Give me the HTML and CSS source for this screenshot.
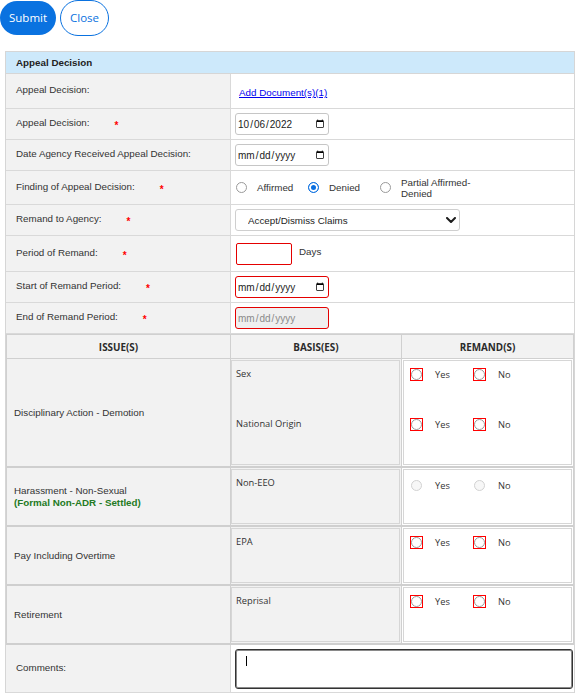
FILE: index.html
```html
<!DOCTYPE html>
<html lang="en">
<head>
<meta charset="utf-8">
<title>Appeal Decision</title>
<link rel="stylesheet" href="styles.css">
</head>
<body>
<div class="actions">
  <button class="btn btn-primary" type="submit">Submit</button>
  <button class="btn btn-outline" type="button">Close</button>
</div>

<section class="panel">
  <h2 class="panel-title">Appeal Decision</h2>

  <div class="field field--link">
    <div class="field-label"><span>Appeal Decision:</span></div>
    <div class="field-value"><a class="doc-link" href="#">Add Document(s)(1)</a></div>
  </div>

  <div class="field">
    <div class="field-label"><span>Appeal Decision:</span><span class="req">*</span></div>
    <div class="field-value"><input class="date" type="date" value="2022-10-06"></div>
  </div>

  <div class="field">
    <div class="field-label"><span>Date Agency Received Appeal Decision:</span></div>
    <div class="field-value"><input class="date" type="date"></div>
  </div>

  <div class="field field--radios">
    <div class="field-label"><span>Finding of Appeal Decision:</span><span class="req">*</span></div>
    <div class="field-value">
      <div class="choices">
        <label class="choice"><input class="radio" type="radio" name="finding"><span class="choice-text">Affirmed</span></label>
        <label class="choice"><input class="radio" type="radio" name="finding" checked><span class="choice-text">Denied</span></label>
        <label class="choice choice--last"><input class="radio" type="radio" name="finding"><span class="choice-text choice-text--wrap">Partial Affirmed-<wbr>Denied</span></label>
      </div>
    </div>
  </div>

  <div class="field">
    <div class="field-label"><span>Remand to Agency:</span><span class="req">*</span></div>
    <div class="field-value">
      <span class="select-wrap">
        <select class="select">
          <option>Accept/Dismiss Claims</option>
        </select>
        <svg class="select-chevron" viewBox="0 0 10 6" aria-hidden="true"><polyline points="1,1 5,5 9,1" fill="none" stroke="#1c1c1c" stroke-width="2" stroke-linecap="round" stroke-linejoin="round"/></svg>
      </span>
    </div>
  </div>

  <div class="field field--days">
    <div class="field-label"><span>Period of Remand:</span><span class="req">*</span></div>
    <div class="field-value">
      <input class="num" type="text">
      <span class="unit">Days</span>
    </div>
  </div>

  <div class="field">
    <div class="field-label"><span>Start of Remand Period:</span><span class="req">*</span></div>
    <div class="field-value"><input class="date date--error" type="date"></div>
  </div>

  <div class="field">
    <div class="field-label"><span>End of Remand Period:</span><span class="req">*</span></div>
    <div class="field-value"><input class="date date--error" type="date" disabled></div>
  </div>

  <table class="issues">
    <thead>
      <tr>
        <th class="th-issue">ISSUE(S)</th>
        <th class="th-basis">BASIS(ES)</th>
        <th class="th-remand">REMAND(S)</th>
      </tr>
    </thead>
    <tbody>
      <tr>
        <td class="issue">Disciplinary Action - Demotion</td>
        <td class="basis">
          <div class="cell-box">
            <div class="basis-item">Sex</div>
            <div class="basis-item">National Origin</div>
          </div>
        </td>
        <td class="remand">
          <div class="cell-box cell-box--white">
            <div class="remand-item">
              <label class="yn"><span class="flag"><input class="radio" type="radio" name="r1"></span><span class="yn-text">Yes</span></label>
              <label class="yn"><span class="flag"><input class="radio" type="radio" name="r1"></span><span class="yn-text">No</span></label>
            </div>
            <div class="remand-item">
              <label class="yn"><span class="flag"><input class="radio" type="radio" name="r2"></span><span class="yn-text">Yes</span></label>
              <label class="yn"><span class="flag"><input class="radio" type="radio" name="r2"></span><span class="yn-text">No</span></label>
            </div>
          </div>
        </td>
      </tr>
      <tr>
        <td class="issue">Harassment - Non-Sexual<br><span class="status">(Formal Non-ADR - Settled)</span></td>
        <td class="basis">
          <div class="cell-box">
            <div class="basis-item">Non-EEO</div>
          </div>
        </td>
        <td class="remand">
          <div class="cell-box cell-box--white">
            <div class="remand-item remand-item--low">
              <label class="yn"><span class="flag flag--off"><input class="radio" type="radio" name="r3" disabled></span><span class="yn-text">Yes</span></label>
              <label class="yn"><span class="flag flag--off"><input class="radio" type="radio" name="r3" disabled></span><span class="yn-text">No</span></label>
            </div>
          </div>
        </td>
      </tr>
      <tr>
        <td class="issue">Pay Including Overtime</td>
        <td class="basis">
          <div class="cell-box">
            <div class="basis-item">EPA</div>
          </div>
        </td>
        <td class="remand">
          <div class="cell-box cell-box--white">
            <div class="remand-item">
              <label class="yn"><span class="flag"><input class="radio" type="radio" name="r4"></span><span class="yn-text">Yes</span></label>
              <label class="yn"><span class="flag"><input class="radio" type="radio" name="r4"></span><span class="yn-text">No</span></label>
            </div>
          </div>
        </td>
      </tr>
      <tr>
        <td class="issue">Retirement</td>
        <td class="basis">
          <div class="cell-box">
            <div class="basis-item">Reprisal</div>
          </div>
        </td>
        <td class="remand">
          <div class="cell-box cell-box--white">
            <div class="remand-item">
              <label class="yn"><span class="flag"><input class="radio" type="radio" name="r5"></span><span class="yn-text">Yes</span></label>
              <label class="yn"><span class="flag"><input class="radio" type="radio" name="r5"></span><span class="yn-text">No</span></label>
            </div>
          </div>
        </td>
      </tr>
    </tbody>
  </table>

  <div class="field field--comments">
    <div class="field-label"><span>Comments:</span></div>
    <div class="field-value">
      <div class="comment-wrap">
        <textarea class="comment" aria-label="Comments"></textarea>
        <span class="caret"></span>
      </div>
    </div>
  </div>
</section>
</body>
</html>
```

FILE: styles.css
```css
html, body {
  margin: 0;
  background: #fff;
}

body {
  font-family: "Liberation Sans", Arial, sans-serif;
  font-size: 9.8px;
  color: #333;
}

/* top action buttons */
.actions {
  display: flex;
  align-items: center;
  gap: 4px;
}

.btn {
  box-sizing: border-box;
  font-family: "Open Sans", "Liberation Sans", sans-serif;
  font-size: 11.5px;
  line-height: 1;
  border-radius: 18px;
  padding: 0 9px;
  cursor: pointer;
}

.btn-primary {
  height: 34px;
  background: #0a72e0;
  color: #fff;
  border: none;
}

.btn-outline {
  height: 36px;
  background: #fff;
  color: #0a72e0;
  border: 1px solid #0a72e0;
}

/* form panel */
.panel {
  box-sizing: border-box;
  width: 570px;
  margin: 15px 0 0 5px;
  border: 1px solid #d6d6d6;
  border-bottom: none;
}

.panel-title {
  margin: 0;
  height: 21px;
  line-height: 21px;
  padding-left: 10px;
  background: #cde9fb;
  border-bottom: 1px solid #d6d6d6;
  font-size: 9.8px;
  font-weight: bold;
  color: #222;
}

.field {
  display: grid;
  grid-template-columns: 225px 1fr;
  height: 30px;
  border-bottom: 1px solid #d9d9d9;
}

.field--link { height: 34px; }
.field--radios { height: 33px; }
.field--days { height: 35px; }
.field--comments { height: 47px; }

.field-label {
  box-sizing: border-box;
  display: flex;
  align-items: center;
  padding: 0 0 3px 10px;
  background: #f2f2f2;
  border-right: 1px solid #d9d9d9;
  white-space: nowrap;
}

.field-value {
  display: flex;
  align-items: center;
  padding-left: 4px;
}

.req {
  margin: 6px 0 0 25px;
  color: #f00;
  font-weight: bold;
  font-size: 10px;
}

.doc-link {
  margin: 3px 0 0 4px;
  color: #0000ee;
  text-decoration: underline;
}

/* inputs */
.date {
  box-sizing: border-box;
  width: 94px;
  height: 22px;
  padding: 0 1px;
  border: 1px solid #c6c6c6;
  border-radius: 3px;
  background: #fff;
  font-family: "Liberation Sans", Arial, sans-serif;
  font-size: 10px;
  color: #222;
}

.date--error {
  border-color: #e40000;
}

.date:disabled {
  background: #efefef;
  color: #8a8a8a;
}

.num {
  box-sizing: border-box;
  width: 56px;
  height: 22px;
  margin-left: 1px;
  border: 1px solid #e40000;
  border-radius: 2px;
  background: #fff;
}

.unit {
  margin: 0 0 5px 7px;
}

.select-wrap {
  position: relative;
  display: inline-flex;
}

.select {
  -webkit-appearance: none;
  appearance: none;
  box-sizing: border-box;
  width: 225px;
  height: 22px;
  padding: 0 0 0 12px;
  border: 1px solid #cfcfcf;
  border-radius: 3px;
  background: #fff;
  font-family: "Liberation Sans", Arial, sans-serif;
  font-size: 9.8px;
  color: #222;
}

.select-chevron {
  position: absolute;
  right: 4px;
  top: 8px;
  width: 10px;
  height: 6px;
  pointer-events: none;
}

/* radio buttons */
.radio {
  -webkit-appearance: none;
  appearance: none;
  box-sizing: border-box;
  flex: none;
  display: block;
  width: 11px;
  height: 11px;
  margin: 0;
  border: 1px solid #9a9a9a;
  border-radius: 50%;
  background: #fff;
}

.radio:checked {
  border-color: #0a6fe0;
  background: #0a6fe0;
  box-shadow: inset 0 0 0 2px #fff;
}

.radio:disabled {
  border-color: #d2d2d2;
  background: #f7f7f7;
}

/* square marker around a required remand choice */
.flag {
  display: inline-flex;
  flex: none;
  border: 1px solid #f00;
}

.flag--off {
  border-color: transparent;
}

.choices {
  display: flex;
  align-items: center;
  padding-left: 1px;
}

.choice {
  display: inline-flex;
  align-items: center;
  width: 72px;
}

.choice--last {
  width: auto;
}

.choice-text {
  margin-left: 10px;
}

.choice-text--wrap {
  width: 74px;
  line-height: 11px;
}

/* issues table */
.issues {
  width: 568px;
  border-collapse: separate;
  border-spacing: 0;
  table-layout: fixed;
  border-top: 1px solid #d0d0d0;
  border-left: 1px solid #d0d0d0;
  border-right: 1px solid #d0d0d0;
  font-family: "Open Sans", "Liberation Sans", sans-serif;
  font-size: 9.3px;
  color: #333;
}

.issues th {
  box-sizing: border-box;
  height: 24px;
  padding: 0;
  background: #f2f2f2;
  border-bottom: 1px solid #d0d0d0;
  font-size: 9.9px;
  font-weight: bold;
  text-align: center;
  color: #2a2a2a;
}

.th-issue { width: 224px; border-right: 1px solid #d0d0d0; }
.th-basis { width: 171px; border-right: 1px solid #d0d0d0; }
.th-remand { width: 171px; }

.issues td {
  box-sizing: border-box;
  border-bottom: 2px solid #cfcfcf;
}

.issue {
  padding: 0 7px;
  background: #f2f2f2;
  border-right: 1px solid #d0d0d0;
  vertical-align: middle;
  font-family: "Liberation Sans", Arial, sans-serif;
  font-size: 9.8px;
  line-height: 11.5px;
}

.status {
  color: #237a23;
  font-weight: bold;
}

.basis {
  padding: 1px 1px 1px 0;
  background: #f2f2f2;
  border-right: 1px solid #d0d0d0;
  vertical-align: top;
}

.remand {
  padding: 1px;
  vertical-align: top;
}

.cell-box {
  padding-bottom: 3px;
  border: 1px solid #d6d6d6;
  background: #f2f2f2;
}

.cell-box--white {
  background: #fff;
}

.basis-item {
  box-sizing: border-box;
  height: 50px;
  padding: 7px 4px 0;
  line-height: 12px;
}

.remand-item {
  box-sizing: border-box;
  display: flex;
  height: 50px;
  padding: 7px 6px 0;
}

.remand-item--low {
  padding-top: 9px;
}

.yn {
  display: inline-flex;
  align-items: center;
  height: 13px;
  width: 63px;
}

.yn-text {
  margin-left: 12px;
}

/* comments */
.comment-wrap {
  position: relative;
}

.comment {
  display: block;
  box-sizing: border-box;
  width: 338px;
  height: 40px;
  padding: 6px 10px;
  border: 1px solid #333;
  border-radius: 3px;
  box-shadow: inset 0 0 0 1px #8a8a8a;
  resize: none;
  font-family: "Liberation Sans", Arial, sans-serif;
  font-size: 9.8px;
}

.caret {
  position: absolute;
  left: 11px;
  top: 7px;
  width: 1px;
  height: 10px;
  background: #000;
}
```
